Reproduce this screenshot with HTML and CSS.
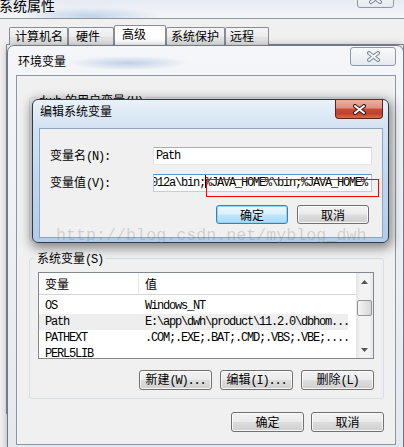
FILE: index.html
```html
<!DOCTYPE html>
<html lang="zh-CN">
<head>
    <meta charset="UTF-8">
    <meta name="viewport" content="width=device-width, initial-scale=1.0">
    <title>编辑系统变量</title>
    <link rel="stylesheet" href="styles.css">
</head>
<body>
    <div class="desk">
        <!-- background window: 系统属性 -->
        <div class="props">
            <div class="props-title">
                <span class="props-caption">系统属性</span>
                <span class="close close-idle close-back">
                    <svg width="13" height="11" viewBox="0 0 13 11"><path d="M2 2l9 7M11 2l-9 7" stroke="#7a8796" stroke-width="4" stroke-linecap="round"/><path d="M2 2l9 7M11 2l-9 7" stroke="#f4f6f9" stroke-width="2" stroke-linecap="round"/></svg>
                </span>
            </div>
            <div class="tabs">
                <span class="tab">计算机名</span>
                <span class="tab">硬件</span>
                <span class="tab active">高级</span>
                <span class="tab">系统保护</span>
                <span class="tab">远程</span>
            </div>
            <div class="tab-page"></div>
        </div>

        <!-- 环境变量 -->
        <div class="window env">
            <div class="win-title">
                <span class="env-caption">环境变量</span>
                <span class="close close-idle">
                    <svg width="13" height="11" viewBox="0 0 13 11"><path d="M2 2l9 7M11 2l-9 7" stroke="#7a8796" stroke-width="4" stroke-linecap="round"/><path d="M2 2l9 7M11 2l-9 7" stroke="#f4f6f9" stroke-width="2" stroke-linecap="round"/></svg>
                </span>
            </div>
            <div class="env-client">
                <div class="group user-vars">
                    <span class="group-title">dwh 的用户变量<span class="mono">(U)</span></span>
                </div>
                <div class="group sys-vars">
                    <span class="group-title">系统变量<span class="mono">(S)</span></span>
                    <div class="list">
                        <div class="list-main">
                            <div class="list-head">
                                <span class="col-name">变量</span>
                                <span class="col-value">值</span>
                            </div>
                            <div class="rows">
                                <div class="row"><span class="col-name mono">OS</span><span class="col-value mono">Windows_NT</span></div>
                                <div class="row sel"><span class="col-name mono">Path</span><span class="col-value mono">E:\app\dwh\product\11.2.0\dbhom...</span></div>
                                <div class="row"><span class="col-name mono">PATHEXT</span><span class="col-value mono">.COM;.EXE;.BAT;.CMD;.VBS;.VBE;....</span></div>
                                <div class="row"><span class="col-name mono">PERL5LIB</span><span class="col-value mono"></span></div>
                            </div>
                        </div>
                        <div class="scrollbar">
                            <span class="arrow"><svg width="7" height="4" viewBox="0 0 7 4"><path d="M0 4L3.5 0L7 4Z" fill="#555"/></svg></span>
                            <span class="thumb"></span>
                            <span class="arrow down"><svg width="7" height="4" viewBox="0 0 7 4"><path d="M0 0L3.5 4L7 0Z" fill="#555"/></svg></span>
                        </div>
                    </div>
                    <div class="btn-row group-btns">
                        <button class="btn">新建<span class="mono">(W)...</span></button>
                        <button class="btn">编辑<span class="mono">(I)...</span></button>
                        <button class="btn">删除<span class="mono">(L)</span></button>
                    </div>
                </div>
                <div class="btn-row footer">
                    <button class="btn">确定</button>
                    <button class="btn">取消</button>
                </div>
            </div>
        </div>

        <!-- 编辑系统变量 -->
        <div class="window edit">
            <div class="win-title">
                <span class="edit-caption">编辑系统变量</span>
                <span class="close close-hot">
                    <svg width="13" height="11" viewBox="0 0 13 11"><path d="M2 2l9 7M11 2l-9 7" stroke="#3a1610" stroke-width="4" stroke-linecap="round"/><path d="M2 2l9 7M11 2l-9 7" stroke="#fff" stroke-width="2" stroke-linecap="round"/></svg>
                </span>
            </div>
            <div class="edit-client">
                <div class="field">
                    <span class="field-label">变量名<span class="mono">(N):</span></span>
                    <div class="textbox mono">Path</div>
                </div>
                <div class="field">
                    <span class="field-label">变量值<span class="mono">(V):</span></span>
                    <div class="textbox focus mono"><span class="scrolled">012a\bin;<span class="caret"></span>%JAVA_HOME%\bin;%JAVA_HOME%</span></div>
                </div>
                <div class="btn-row edit-btns">
                    <button class="btn default">确定</button>
                    <button class="btn">取消</button>
                </div>
            </div>
        </div>

        <div class="annot"></div>
        <div class="watermark">http://blog.csdn.net/myblog_dwh</div>
    </div>
</body>
</html>
```

FILE: styles.css
```css
* {
    box-sizing: border-box;
}
body {
    margin: 0;
    width: 404px;
    height: 447px;
    overflow: hidden;
    font-family: "Noto Sans CJK SC", "Liberation Sans", sans-serif;
    font-size: 12px;
    color: #000;
    background: #f0f0f0;
}
.desk {
    position: relative;
    width: 404px;
    height: 447px;
    overflow: hidden;
}
.mono {
    font-family: "Liberation Mono", "Noto Sans CJK SC", monospace;
    font-size: 12px;
    letter-spacing: -1.2px;
}

/* background window */
.props {
    height: 447px;
    background: #f0f0f0;
}
.props-title {
    display: flex;
    align-items: flex-start;
    height: 19px;
    border-bottom: 1px solid #8d96a1;
    background:
        radial-gradient(ellipse 70px 9px at 90px 16px, rgba(130, 170, 215, 0.45), transparent),
        linear-gradient(#e6ebf1, #f4f6f9);
}
.props-caption {
    margin: -3px 0 0 -1px;
    font-size: 14px;
    line-height: 16px;
}
.tabs {
    display: flex;
    align-items: flex-end;
    height: 20px;
    margin: 6px 0 0 9px;
}
.tab {
    height: 18px;
    padding-left: 5px;
    border: 1px solid #898c95;
    border-bottom: 0;
    border-radius: 2px 2px 0 0;
    background: linear-gradient(#f6f6f6, #ececec 50%, #e2e2e2 51%, #e6e6e6);
    line-height: 16px;
    white-space: nowrap;
}
.tab:nth-child(1) { width: 59px; }
.tab:nth-child(2) { width: 46px; padding-left: 7px; }
.tab:nth-child(3) { width: 52px; padding-left: 7px; }
.tab:nth-child(4) { width: 59px; padding-left: 4px; }
.tab:nth-child(5) { width: 44px; padding-left: 4px; }
.tab.active {
    height: 20px;
    background: #fff;
}
.tab-page {
    height: 370px;
    margin: -1px 0 0 6px;
    border: 1px solid #898c95;
    background: #fbfbfb;
}

/* windows */
.window {
    position: absolute;
}
.win-title {
    display: flex;
    align-items: flex-start;
}
.close {
    display: flex;
    align-items: center;
    justify-content: center;
    margin-left: auto;
}
.close-idle {
    width: 46px;
    height: 19px;
    border: 1px solid #8d99a8;
    border-radius: 3px;
    background: linear-gradient(#f8f9fb, #e6eaef);
}
.close-back {
    width: 37px;
    height: 20px;
    margin: -12px 10px 0 auto;
}
.close-hot {
    width: 48px;
    height: 19px;
    border: 1px solid #5a2219;
    border-top: 0;
    border-radius: 0 0 4px 4px;
    background: linear-gradient(#eab0a3, #dd9281 45%, #c84c36 50%, #c2412a 75%, #d66e4b);
}

.env {
    left: 7px;
    top: 45px;
    width: 397px;
    height: 405px;
    padding: 0 7px 0 8px;
    border: 1px solid #6f7a86;
    border-radius: 7px 7px 0 0;
    background:
        radial-gradient(ellipse 60px 7px at 120px 17px, rgba(110, 150, 205, 0.4), transparent),
        linear-gradient(#f4f6f9, #e4e9ef);
    box-shadow: 0 0 7px rgba(0, 0, 0, 0.3);
}
.env .win-title {
    height: 29px;
}
.env .close-idle {
    margin-top: 1px;
}
.env-caption {
    margin: 8px 0 0 2px;
    line-height: 14px;
}
.env-client {
    display: flex;
    flex-direction: column;
    height: 370px;
    padding: 21px 11px 0 12px;
    border: 1px solid #8a96a4;
    background: #f0f0f0;
}
.group {
    border: 1px solid #d5dfe5;
    border-radius: 3px;
}
.group-title {
    display: block;
    width: fit-content;
    margin: -8px 0 0 5px;
    padding: 0 2px;
    line-height: 14px;
    background: #f0f0f0;
}
.user-vars {
    height: 144px;
}
.user-vars .group-title {
    margin: -5px 0 0 6px;
}
.sys-vars {
    height: 141px;
    margin-top: 17px;
}

/* list view */
.list {
    display: flex;
    height: 87px;
    margin: 5px 9px 0 8px;
    border: 1px solid #828790;
    background: #fff;
}
.list-main {
    flex: 1;
    overflow: hidden;
}
.list-head {
    display: flex;
    height: 22px;
    border-bottom: 1px solid #d5d5d5;
    line-height: 21px;
}
.list-head .col-name {
    border-right: 1px solid #e5e5e5;
}
.col-name {
    flex: none;
    width: 100px;
    padding-left: 6px;
}
.col-value {
    padding-left: 6px;
    white-space: nowrap;
}
.rows {
    width: 309px;
    padding-top: 3px;
}
.row {
    display: flex;
    height: 16px;
    line-height: 16px;
}
.row.sel {
    background: #eeeeee;
}
.scrollbar {
    display: flex;
    flex-direction: column;
    align-items: center;
    width: 17px;
    background: linear-gradient(90deg, #e4e4e4, #f3f3f3 25%, #f3f3f3 75%, #e8e8e8);
}
.arrow {
    display: flex;
    align-items: center;
    justify-content: center;
    height: 17px;
}
.arrow.down {
    margin-top: auto;
}
.thumb {
    width: 15px;
    height: 16px;
    margin-top: 10px;
    border: 1px solid #959595;
    border-radius: 2px;
    background: linear-gradient(90deg, #f4f4f4, #e6e6e6 50%, #d8d8d8);
}

/* buttons */
.btn-row {
    display: flex;
    justify-content: flex-end;
    gap: 8px;
}
.group-btns {
    margin: 11px 9px 0 0;
}
.footer {
    margin-top: 13px;
    gap: 7px;
}
.btn {
    width: 73px;
    height: 20px;
    padding: 0;
    border: 1px solid #707070;
    border-radius: 3px;
    background: linear-gradient(#f3f3f3, #ebebeb 48%, #dddddd 52%, #cfcfcf);
    box-shadow: inset 0 0 0 1px rgba(255, 255, 255, 0.8);
    font: inherit;
    line-height: 16px;
    color: #000;
    white-space: nowrap;
}
.btn.default {
    border-color: #3c7fb1;
    background: linear-gradient(#ecf7fd, #dcf1fc 48%, #c0e6fb 52%, #a9daf5);
    box-shadow: inset 0 0 0 1px #8fd6f7;
}

/* edit dialog */
.edit {
    left: 32px;
    top: 99px;
    width: 357px;
    height: 144px;
    padding: 0 5px 0 6px;
    border: 1px solid #2f3b48;
    border-radius: 6px;
    background: linear-gradient(#eaf1f9, #d4e3f4 18%, #bfd5ed 60%, #b3cce9);
    box-shadow: 1px 3px 11px 2px rgba(0, 0, 0, 0.45);
}
.edit .win-title {
    height: 28px;
}
.edit-caption {
    margin: 4px 0 0 1px;
    line-height: 14px;
}
.edit-client {
    height: 110px;
    padding: 18px 10px 0;
    border: 1px solid #8ea5bf;
    background: #f0f0f0;
}
.field {
    display: flex;
    align-items: center;
    height: 18px;
}
.field + .field {
    margin-top: 9px;
}
.field-label {
    width: 103px;
    line-height: 16px;
}
.textbox {
    width: 219px;
    height: 18px;
    padding-left: 2px;
    overflow: hidden;
    white-space: nowrap;
    line-height: 16px;
    border: 1px solid;
    border-color: #abadb3 #dbdfe6 #e3e9ef #e2e3ea;
    background: #fff;
}
.textbox.focus {
    padding-left: 0;
    border-color: #5c93c9 #a9cbe9 #b5d3ee #a9cbe9;
}
.scrolled {
    margin-left: -3px;
}
.caret {
    display: inline-block;
    width: 1px;
    height: 13px;
    margin-right: -1px;
    vertical-align: -2px;
    background: #000;
}
.edit-btns {
    gap: 9px;
    margin: 13px 3px 0 0;
}
.edit-btns .btn {
    width: 72px;
    height: 19px;
    line-height: 15px;
}

/* annotation and watermark over the screenshot */
.annot {
    position: absolute;
    left: 206px;
    top: 179px;
    width: 173px;
    height: 18px;
    border: 1px solid #f00;
}
.watermark {
    position: absolute;
    left: 56px;
    top: 226px;
    font-family: "Liberation Mono", monospace;
    font-size: 16.7px;
    line-height: 20px;
    color: rgba(120, 120, 120, 0.28);
    white-space: nowrap;
}
```
